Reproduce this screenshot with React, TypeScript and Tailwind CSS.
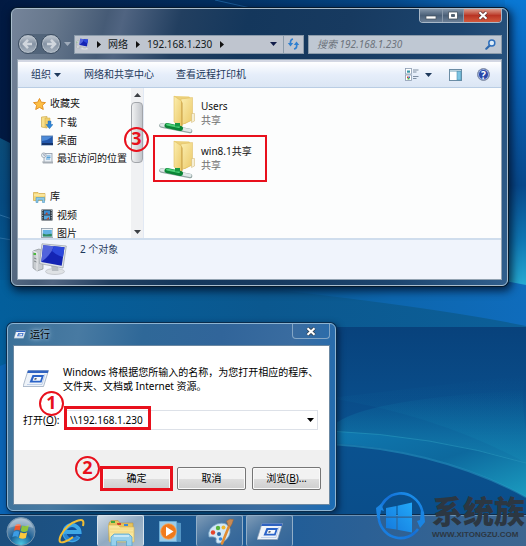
import type { ReactNode } from "react";

const favorites = [
  { label: "下载", icon: <DownloadIcon /> },
  { label: "桌面", icon: <DesktopIcon /> },
  { label: "最近访问的位置", icon: <RecentIcon /> },
];

const libraries = [
  { label: "视频", icon: <VideoIcon /> },
  { label: "图片", icon: <PictureIcon /> },
];

const shares = ["Users", "win8.1共享"];

export default function App() {
  return (
    <div className="relative flex min-h-screen flex-col overflow-hidden bg-[#0a4f88] font-['Noto_Sans','Noto_Sans_CJK_SC',sans-serif] text-[10px] text-black">
      <Wallpaper />
      <ExplorerWindow />
      <RunDialog />
      <Taskbar />
      <Watermark />
    </div>
  );
}

function Wallpaper() {
  return (
    <svg className="absolute inset-0 h-full w-full" viewBox="0 0 526 546" preserveAspectRatio="none" aria-hidden="true">
      <defs>
        <linearGradient id="sky" x1="0" x2="1" y1="0" y2="0">
          <stop offset="0" stopColor="#021a42" />
          <stop offset=".4" stopColor="#032f60" />
          <stop offset=".75" stopColor="#054a8c" />
          <stop offset="1" stopColor="#0a7ad6" />
        </linearGradient>
        <linearGradient id="right" x1="0" x2="0" y1="0" y2="1">
          <stop offset="0" stopColor="#0a78d4" />
          <stop offset=".3" stopColor="#0860b4" />
          <stop offset=".65" stopColor="#07488a" />
          <stop offset=".85" stopColor="#0f78b4" />
          <stop offset="1" stopColor="#25aad2" />
        </linearGradient>
        <linearGradient id="leftTeal" x1="0" x2="0" y1="0" y2="1">
          <stop offset="0" stopColor="#0b4c78" />
          <stop offset=".4" stopColor="#064a80" />
          <stop offset="1" stopColor="#035c98" />
        </linearGradient>
        <linearGradient id="middle" x1="0" x2="1" y1="0" y2="0">
          <stop offset="0" stopColor="#035f9c" />
          <stop offset=".5" stopColor="#0b588f" />
          <stop offset="1" stopColor="#0c5f98" />
        </linearGradient>
        <linearGradient id="ridge" x1="0" x2="1" y1="0" y2="0">
          <stop offset="0" stopColor="#0a5990" />
          <stop offset=".5" stopColor="#0d66ae" />
          <stop offset="1" stopColor="#0f6cbc" />
        </linearGradient>
        <linearGradient id="deep" x1="0" x2="0" y1="0" y2="1">
          <stop offset="0" stopColor="#08427c" />
          <stop offset=".5" stopColor="#0a5290" />
          <stop offset="1" stopColor="#0a4c88" />
        </linearGradient>
        <linearGradient id="beam" x1="0" x2="1" y1="0" y2="1">
          <stop offset="0" stopColor="#0f78b0" />
          <stop offset=".5" stopColor="#0d699e" />
          <stop offset="1" stopColor="#1b9cc0" />
        </linearGradient>
        <linearGradient id="glow" x1="0" x2="0" y1="0" y2="1">
          <stop offset="0" stopColor="#0f86b4" stopOpacity="0" />
          <stop offset="1" stopColor="#1896bc" stopOpacity=".9" />
        </linearGradient>
      </defs>
      <rect width="526" height="290" fill="url(#sky)" />
      <path d="M215 0L255 9" stroke="#1a5c98" strokeWidth="1" />
      <path d="M0 138L12 144V290H0z" fill="url(#leftTeal)" />
      <path d="M0 215L12 219M0 238L12 240" stroke="#2a6fa4" strokeWidth="1" />
      <rect y="280" width="526" height="266" fill="url(#middle)" />
      <path d="M260 280H526V326Q440 308 260 288z" fill="url(#ridge)" />
      <path d="M505 0H526V285L505 281z" fill="url(#right)" />
      <path d="M0 366Q12 360 30 362V514H0z" fill="#0b64b4" />
      <path d="M330 327H526V546H330z" fill="url(#deep)" />
      <path d="M330 398Q440 416 526 463V430Q520 395 526 375z" fill="url(#glow)" opacity=".25" />
      <path d="M330 431Q430 435 526 463V497Q440 449 330 443z" fill="url(#beam)" />
      <path d="M330 429Q350 400 526 390V463Q430 435 330 431z" fill="url(#glow)" opacity=".75" />
      <path d="M330 431Q430 435 526 463" fill="none" stroke="#2897bc" strokeWidth="1" opacity=".6" />
      <path d="M330 444Q440 450 526 497" fill="none" stroke="#2aa0c8" strokeWidth="2" opacity=".5" />
    </svg>
  );
}

function ExplorerWindow() {
  return (
    <section
      aria-label="网络"
      className="relative mt-2 mr-[18px] ml-[11px] rounded-md border border-[#a9bccb] bg-[linear-gradient(105deg,#75849a_0%,#66778c_8%,#465b76_17%,#506481_20%,#223f60_30%,#14375c_42%,#173a60_60%,#1c456f_80%,#315f8d_100%)] px-[5px] pb-[5px] shadow-[0_0_0_1px_#061a2c,2px_3px_8px_2px_rgba(0,10,30,0.75)]"
    >
      <div className="flex h-[14px] justify-end">
        <div className="flex overflow-hidden rounded-b border border-t-0 border-[#a8b8c8]">
          <CaptionButton label="最小化" className="w-[23px] border-r border-[#8798aa] bg-linear-to-b from-[#8496aa] via-[#4b6078] to-[#6b7f96]">
            <rect x="1" y="5" width="10" height="3" fill="#fff" stroke="#45505c" strokeWidth=".7" />
          </CaptionButton>
          <CaptionButton label="最大化" className="w-[21px] border-r border-[#8798aa] bg-linear-to-b from-[#8496aa] via-[#4b6078] to-[#6b7f96]">
            <path fillRule="evenodd" d="M1.500 1H10.500V8H1.500zM4.500 3.500V5.500H7.500V3.500z" fill="#fff" stroke="#45505c" strokeWidth=".8" />
          </CaptionButton>
          <CaptionButton label="关闭" className="w-[37px] bg-linear-to-b from-[#d99a8c] via-[#b93424] to-[#d2583c]">
            <path d="M2.500 1.200L9.500 7.800M9.500 1.200L2.500 7.800" stroke="#5c3434" strokeWidth="3.600" />
            <path d="M2.500 1.200L9.500 7.800M9.500 1.200L2.500 7.800" stroke="#fff" strokeWidth="2.200" />
          </CaptionButton>
        </div>
      </div>

      <div className="mt-[9px] mb-[3px] flex h-6 items-center">
        <div className="ml-px flex items-center gap-[3px] rounded-full bg-[#43566d]/60">
          <RoundButton label="后退" path="M14.500 10H6M10 5.500L5.500 10L10 14.500" />
          <RoundButton label="前进" path="M5.500 10H14M10 5.500L14.500 10L10 14.500" />
        </div>
        <span className="mx-[3px]">
          <Caret color="#9fabba" />
        </span>
        <div className="flex h-[19px] min-w-0 flex-1 items-center border border-[#8c9cab] bg-[#bfc5cf] pl-px">
          <PcIcon className="h-3 w-[13px] shrink-0" />
          <Chevron />
          <button className="ml-[7px] text-[#101820]">网络</button>
          <Chevron />
          <button className="ml-[7px] text-[#101820]">192.168.1.230</button>
          <Chevron />
          <button aria-label="历史记录" className="mr-[6px] ml-auto">
            <Caret color="#101c48" />
          </button>
          <button aria-label="刷新" className="flex h-full w-5 items-center justify-center border-l border-[#8c9cab]">
            <svg className="h-[12px] w-[13px]" viewBox="0 0 13 12">
              <path d="M6 1Q3 1.500 3.500 6M7 11Q10.500 10.500 9.500 6" fill="none" stroke="#2f7fd0" strokeWidth="1.700" />
              <path d="M.8 5H6.200L3.500 8.500zM6.800 7H12.200L9.500 3.500z" fill="#2f7fd0" />
            </svg>
          </button>
        </div>
        <div className="ml-1 flex h-[19px] w-[194px] items-center border border-[#8c9cab] bg-[#bfc8d3] pr-[5px] pl-2">
          <input
            type="search"
            aria-label="搜索"
            placeholder="搜索 192.168.1.230"
            className="min-w-0 flex-1 bg-transparent italic outline-none placeholder:text-[#6d747d]"
          />
          <svg className="h-[11px] w-[11px]" viewBox="0 0 11 11" fill="none">
            <path d="M5 6.200L1.300 9.700" stroke="#2e68ac" strokeWidth="2.200" strokeLinecap="round" />
            <circle cx="6.800" cy="4" r="3" stroke="#2e6fbc" strokeWidth="1.500" fill="#dcecf8" />
          </svg>
        </div>
      </div>

      <div className="border border-[#93a3b2] bg-[#fcfdfd]">
        <div className="flex h-7 items-center border-t-2 border-b border-t-[#d3d7e3] border-b-[#b9cde4] bg-linear-to-b from-white via-[#e6eefa] to-[#dbe6f4] pr-[11px] pl-[13px] text-[#1e395b]">
          <button className="flex items-center gap-[3px]">
            组织 <Caret color="#1e395b" />
          </button>
          <button className="ml-[23px] whitespace-nowrap">网络和共享中心</button>
          <button className="ml-[22px] whitespace-nowrap">查看远程打印机</button>
          <button aria-label="更改视图" className="ml-auto flex items-center gap-[6px]">
            <ViewsIcon />
            <Caret color="#1e395b" />
          </button>
          <button aria-label="预览窗格" className="ml-[17px]">
            <PaneIcon />
          </button>
          <button aria-label="帮助" className="ml-[15px] flex h-[13px] w-[13px] items-center justify-center rounded-full border border-[#8c96a8] bg-[#2846a8] text-[10px] leading-none font-bold text-white shadow-[inset_0_0_0_1px_#9ab0e0]">
            ?
          </button>
        </div>

        <div className="flex h-[150px]">
          <nav className="w-[113px] shrink-0 overflow-hidden pt-[6px] pl-[15px] text-[#111]">
            <TreeGroup title="收藏夹" icon={<StarIcon />} items={favorites} />
            <div className="h-5" />
            <TreeGroup title="库" icon={<LibraryIcon />} items={libraries} />
          </nav>
          <div className="flex w-[13px] shrink-0 flex-col items-center border-r border-[#e2e9f4] bg-[#f0f1f3]" aria-hidden="true">
            <svg className="my-[5px] h-1 w-[7px]" viewBox="0 0 7 4">
              <path d="M0 4L3.500 0L7 4z" fill="#3c3f44" />
            </svg>
            <div className="relative h-[61px] w-3 rounded-sm border border-[#a2a5aa] bg-linear-to-r from-[#f0f1f2] to-[#c2c5ca]">
              <Step n={3} className="top-6 -left-2" />
            </div>
            <span className="mt-auto mb-1">
              <Caret color="#3c3f44" />
            </span>
          </div>
          <ul className="pt-1 pl-[9px]">
            {shares.map((name, i) => (
              <li key={name} className="relative flex h-[45px] w-[114px] items-center pl-[6px]">
                <ShareFolderIcon />
                <div className="mb-1 ml-[6px] leading-[14px]">
                  <p className="text-[#111]">{name}</p>
                  <p className="text-[#707070]">共享</p>
                </div>
                {i === 1 && <span className="absolute -top-[2px] bottom-0 left-0 w-[114px] border-2 border-[#e8101c]" />}
              </li>
            ))}
          </ul>
        </div>

        <footer className="flex h-[41px] border-t-2 border-[#cfdded] bg-[#f0f4fc] pl-[14px] text-[#1e395b]">
          <PcIcon className="mt-[3px] h-8 w-[35px]" />
          <p className="mt-[2px] ml-[13px] leading-[14px]">2 个对象</p>
        </footer>
      </div>
    </section>
  );
}

function CaptionButton({ label, className, children }: { label: string; className: string; children: ReactNode }) {
  return (
    <button aria-label={label} className={`flex items-center justify-center ${className}`}>
      <svg className="h-[9px] w-3" viewBox="0 0 12 9">
        {children}
      </svg>
    </button>
  );
}

function RoundButton({ label, path }: { label: string; path: string }) {
  return (
    <button
      aria-label={label}
      className="h-5 w-5 rounded-full border border-[#3d4e62] bg-linear-to-b from-[#c3cad2] via-[#8593a4] to-[#a9b4c0] shadow-[inset_0_0_0_1px_#b6c0ca]"
    >
      <svg viewBox="0 0 20 20" fill="none">
        <path d={path} stroke="#d0d6dd" strokeWidth="2.800" />
      </svg>
    </button>
  );
}

function Caret({ color }: { color: string }) {
  return (
    <svg className="block h-1 w-[7px]" viewBox="0 0 7 4">
      <path d="M0 0H7L3.500 4z" fill={color} />
    </svg>
  );
}

function Chevron() {
  return (
    <svg className="ml-2 h-[7px] w-1 shrink-0" viewBox="0 0 4 7">
      <path d="M0 0L4 3.500L0 7z" fill="#101010" />
    </svg>
  );
}

// Red numbered marker
function Step({ n, className }: { n: number; className: string }) {
  return (
    <span
      className={`absolute z-10 flex h-[25px] w-[25px] items-center justify-center rounded-full border-2 border-[#e8101c] pb-[3px] text-[18px] leading-none font-bold text-[#e8101c] ${className}`}
    >
      {n}
    </span>
  );
}

function TreeGroup({ title, icon, items }: { title: string; icon: ReactNode; items: { label: string; icon: ReactNode }[] }) {
  return (
    <div>
      <h2 className="flex h-[19px] items-center gap-1">
        {icon}
        {title}
      </h2>
      <ul className="pl-2">
        {items.map((item) => (
          <li key={item.label} className="flex h-[18px] items-center gap-1 whitespace-nowrap">
            {item.icon}
            {item.label}
          </li>
        ))}
      </ul>
    </div>
  );
}

function RunDialog() {
  return (
    <section
      aria-label="运行"
      className="relative mt-[37px] ml-[7px] w-[329px] rounded-md border border-[#8db4d2] bg-[linear-gradient(100deg,#3b7098_0%,#487aa2_20%,#2f6898_38%,#31659a_60%,#3a6ca0_80%,#1c6cb4_100%)] px-[5px] pb-[5px] shadow-[0_0_0_1px_#0a2c4c,2px_2px_6px_1px_rgba(0,15,40,0.6)]"
    >
      <div className="flex h-[21px] items-start">
        <div className="flex h-full items-center gap-1 pl-px">
          <RunIcon className="h-[9px] w-[12px]" />
          <h1 className="text-black [text-shadow:0_0_6px_#b8d4e8,0_0_3px_#b8d4e8]">运行</h1>
        </div>
        <button aria-label="关闭" className="ml-auto flex h-[15px] w-[38px] items-center justify-center rounded-b border border-t-0 border-[#83a6c6]">
          <svg className="h-[9px] w-3" viewBox="0 0 12 9">
            <path d="M2.500 1.200L9.500 7.800M9.500 1.200L2.500 7.800" stroke="#303c48" strokeWidth="3.600" />
            <path d="M2.500 1.200L9.500 7.800M9.500 1.200L2.500 7.800" stroke="#fff" strokeWidth="2.200" />
          </svg>
        </button>
      </div>
      <form className="border border-[#6b88a2] bg-white" onSubmit={(e) => e.preventDefault()}>
        <div className="pt-[19px] pr-[11px] pb-5 pl-[9px]">
          <div className="flex gap-[14px]">
            <RunIcon className="mt-[5px] h-[17px] w-[26px] shrink-0" />
            <p className="leading-[14px] whitespace-nowrap">
              Windows 将根据您所输入的名称，为您打开相应的程序、
              <br />
              文件夹、文档或 Internet 资源。
            </p>
          </div>
          <div className="mt-[17px] flex h-5 items-center">
            <label htmlFor="run-target" className="w-[41px] whitespace-nowrap">
              打开(<u>O</u>):
            </label>
            <div className="relative flex h-full flex-1 items-center border border-[#dde1e8] pr-[3px]">
              <input id="run-target" defaultValue="\\192.168.1.230" className="min-w-0 flex-1 bg-transparent pl-[5px] outline-none" />
              <button type="button" aria-label="展开">
                <Caret color="#000" />
              </button>
              <span className="pointer-events-none absolute -top-[5px] -left-[1px] h-6 w-[87px] border-[3px] border-[#e8101c]" />
              <Step n={1} className="-top-5 -left-[26px]" />
            </div>
          </div>
        </div>
        <div className="flex h-[54px] items-start justify-end gap-[6px] bg-[#f0f0f0] pt-[17px] pr-2">
          <div className="relative">
            <DialogButton>确定</DialogButton>
            <span className="pointer-events-none absolute -inset-x-[2px] -inset-y-px border-[3px] border-[#e8101c]" />
            <Step n={2} className="-top-[11px] -left-[27px]" />
          </div>
          <DialogButton>取消</DialogButton>
          <DialogButton>
            浏览(<u>B</u>)...
          </DialogButton>
        </div>
      </form>
    </section>
  );
}

function DialogButton({ children }: { children: ReactNode }) {
  return (
    <button
      type="button"
      className="block h-[23px] w-[69px] rounded-xs border border-[#767676] bg-linear-to-b from-[#f2f2f2] from-50% via-[#dfdfdf] via-50% to-[#cfcfcf] shadow-[inset_0_0_0_1px_#fafafa]"
    >
      {children}
    </button>
  );
}

function Taskbar() {
  return (
    <footer className="relative mt-auto flex h-8 items-stretch border-t border-[#0c2c4c] bg-linear-to-r from-[#1c4f7e] via-[#1d5c98] to-[#3d6690] pl-[6px] shadow-[inset_0_1px_0_#6c93b6]">
      <button aria-label="开始" className="w-[30px]">
        <StartIcon />
      </button>
      <button aria-label="Internet Explorer" className="ml-5 w-[30px]">
        <IeIcon />
      </button>
      <button aria-label="资源管理器" className="ml-[11px] flex w-[47px] justify-center rounded-xs border border-b-0 border-[#d8e4ee] bg-linear-to-br from-[#cfdae4] via-[#91aac2] to-[#a8bccd]">
        <ExplorerIcon />
      </button>
      <button aria-label="媒体播放器" className="mx-[13px] w-[26px]">
        <MediaIcon />
      </button>
      <button aria-label="画图" className="flex w-[47px] justify-center rounded-xs border border-b-0 border-[#91aec8] bg-linear-to-br from-[#7d9ab6] via-[#406f9c] to-[#32659a]">
        <PaintIcon />
      </button>
      <button aria-label="运行" className="ml-[3px] flex w-[47px] items-center justify-center rounded-xs border border-b-0 border-[#91aec8] bg-linear-to-br from-[#7d9ab6] via-[#406f9c] to-[#32659a]">
        <RunIcon className="h-[17px] w-[26px]" />
      </button>
    </footer>
  );
}

function Watermark() {
  return (
    <div className="pointer-events-none absolute right-0 bottom-0 flex w-[150px] items-start pb-1">
      <svg className="h-[52px] w-[50px] shrink-0" viewBox="0 0 50 52" fill="none">
        <defs>
          <linearGradient id="ring" x1="0" y1="1" x2="1" y2="0">
            <stop offset="0" stopColor="#1b86e6" />
            <stop offset=".55" stopColor="#1470d8" />
            <stop offset="1" stopColor="#1c9af0" />
          </linearGradient>
          <linearGradient id="panes" x1="0" y1="1" x2="1" y2="0">
            <stop offset="0" stopColor="#1478dc" />
            <stop offset="1" stopColor="#22a8f8" />
          </linearGradient>
        </defs>
        <path d="M3 24A22 23 0 0 1 46 20Q47.500 25 46 33" stroke="url(#ring)" strokeWidth="2.600" />
        <path d="M42 39A22 23 0 0 1 3 30L2 20" stroke="url(#ring)" strokeWidth="2.600" />
        <path d="M41 31L44 38L49 32L48 22L45 20L44 30zM0 18L5 14L8 21L4.500 20L3.500 30L1 27z" fill="#1a84e2" />
        <path d="M10 18L20.500 16V26.500H10zM21.500 15.800L36 12.500V26.500H21.500zM10 27.800H20.500V39.500L10 38zM21.500 27.800H36V42.500L21.500 39.700z" fill="url(#panes)" />
      </svg>
      <div className="mt-1 ml-[6px] whitespace-nowrap text-[#2c3742]">
        <p className="font-['Noto_Sans_CJK_SC',sans-serif] text-[31px] leading-[32px] font-black">系统族</p>
        <p className="mt-1 font-['Liberation_Sans',sans-serif] text-[8px] leading-[10px] font-bold">WWW.XITONGZU.COM</p>
      </div>
    </div>
  );
}

function StarIcon() {
  return (
    <svg className="h-3 w-[13px]" viewBox="0 0 13 12">
      <path d="M6.500 .5L8.300 4.200L12.500 4.600L9.400 7.300L10.300 11.500L6.500 9.400L2.700 11.500L3.600 7.300L.5 4.600L4.700 4.200z" fill="#fdbf45" stroke="#e08a1c" strokeWidth=".9" />
    </svg>
  );
}

function DownloadIcon() {
  return (
    <svg className="h-[13px] w-3" viewBox="0 0 12 13">
      <path d="M.5 1L6 .5V12L.5 11z" fill="#f7df8a" stroke="#cfa94a" strokeWidth=".7" />
      <path d="M4 2H9V11H4z" fill="#f1cf6c" stroke="#cfa94a" strokeWidth=".5" />
      <path d="M7 5H10V8.500H12L8.500 12.700L5 8.500H7z" fill="#2f86d8" stroke="#1c62a8" strokeWidth=".4" />
    </svg>
  );
}

function DesktopIcon() {
  return (
    <svg className="h-[11px] w-3" viewBox="0 0 12 11">
      <rect x=".5" y="1" width="11.500" height="9" fill="#2358ac" stroke="#6d8fb8" />
      <path d="M1 1.500H11.500L6 5L1 6z" fill="#4c8ad8" />
      <rect x="1" y="8" width="11" height="2" fill="#16356c" />
    </svg>
  );
}

function RecentIcon() {
  return (
    <svg className="h-3 w-3" viewBox="0 0 12 12">
      <rect x="3" y="1.500" width="8" height="9" fill="#e8eef4" stroke="#8e9aa8" strokeWidth=".8" />
      <path d="M5.500 4H9.500M5.500 5.500H9.500M5 7H9" stroke="#55a0d8" />
      <path d="M1 9.500H12V11.500H2z" fill="#a5adb5" />
      <circle cx="2.800" cy="3.200" r="2.300" fill="#e8f2f8" stroke="#8b949e" strokeWidth=".7" />
      <path d="M2.800 1.800V3.300H4" stroke="#557" strokeWidth=".5" fill="none" />
    </svg>
  );
}

function LibraryIcon() {
  return (
    <svg className="h-3 w-[13px]" viewBox="0 0 13 12">
      <path d="M.5 1.500H5L6 2.500H12V9.500H.5z" fill="#f5d878" stroke="#d0a748" strokeWidth=".7" />
      <path d="M1 4H12" stroke="#fff3be" />
      <path d="M3 6.500H11.500V11.500H9.500V9H5V11.500H3z" fill="#8cc8e8" stroke="#4c98c4" strokeWidth=".6" />
    </svg>
  );
}

function VideoIcon() {
  return (
    <svg className="h-3 w-3" viewBox="0 0 12 12">
      <rect x=".5" y=".5" width="11" height="11" fill="#2a3640" />
      <path d="M1.700 1V11M10.300 1V11" stroke="#b9c6cf" strokeDasharray="1.200 1.200" />
      <rect x="3" y="1.500" width="6" height="4" fill="#3a8cd0" />
      <rect x="3" y="6.500" width="6" height="4" fill="#58a6dc" />
      <path d="M4 5.500L6 3L7 5.500zM5 10.500L8 8V10.500z" fill="#b8442c" />
    </svg>
  );
}

function PictureIcon() {
  return (
    <svg className="h-[11px] w-3" viewBox="0 0 12 11">
      <rect x=".5" y=".5" width="11.500" height="9" fill="#eaf2f6" stroke="#8a98a6" strokeWidth=".8" />
      <rect x="1.800" y="2" width="9" height="6.500" fill="#62b2e4" />
      <path d="M1.800 8.500V5.500L5 6.500L10.800 5.800V8.500z" fill="#2f8a60" />
    </svg>
  );
}

function ViewsIcon() {
  return (
    <svg className="h-[13px] w-[14px]" viewBox="0 0 14 13">
      <rect x=".5" y=".5" width="6" height="5.500" fill="#fff" stroke="#8b9bb0" strokeWidth=".8" />
      <rect x=".5" y="7" width="6" height="5.500" fill="#fff" stroke="#8b9bb0" strokeWidth=".8" />
      <rect x="2" y="2.500" width="3" height="2.200" fill="#3a98a8" />
      <path d="M2 8.500H3.500V10H2z" fill="#d83c2c" />
      <path d="M3.500 8.500H5V10H3.500z" fill="#3866c8" />
      <path d="M2.500 10H4.500V11.500H2.500z" fill="#4ab03c" />
      <path d="M8 2H13.500M8 4H11.500M8 8.500H13.500M8 10.500H11.500" stroke="#7f8ea2" />
    </svg>
  );
}

function PaneIcon() {
  return (
    <svg className="h-3 w-[13px]" viewBox="0 0 13 12">
      <rect x=".5" y=".5" width="12" height="11" fill="#fff" stroke="#6c8ca4" />
      <path d="M.5 2H12.500" stroke="#6fa0b8" />
      <rect x="8" y="2.500" width="4" height="8.500" fill="#7cc4e2" stroke="#4c90b0" strokeWidth=".6" />
    </svg>
  );
}

function PcIcon({ className }: { className: string }) {
  return (
    <svg className={className} viewBox="0 0 35 32">
      <path d="M1 8L7 6L11 8V26L5 28L1 25z" fill="#c8ccd0" stroke="#8d9398" strokeWidth=".7" />
      <path d="M1 8L5 10V28" fill="none" stroke="#eef0f2" />
      <rect x="1.500" y="10" width="2.500" height="2" fill="#4ab83c" />
      <path d="M2 15L4.500 16M2 18L4.500 19" stroke="#6d7378" strokeWidth=".8" />
      <ellipse cx="23" cy="28.500" rx="9.500" ry="3" fill="#dfe2e5" stroke="#b1b6bb" strokeWidth=".6" />
      <path d="M19 22L26 23L26.500 28H20z" fill="#b9bec3" />
      <path d="M10 .8L34.300 3L31 25L7.500 20.500z" fill="#dfe3e7" stroke="#989fa6" strokeWidth=".7" />
      <path d="M11.200 2.200L32.500 4.200L29.700 22.800L9.300 19z" fill="#1424b4" />
      <path d="M11.200 2.200L22 3.200Q19 12 9.300 19z" fill="#5264dc" />
      <path d="M22 3.200L32.500 4.200L31 14Q24 12 20 8z" fill="#2c48dc" />
    </svg>
  );
}

function ShareFolderIcon() {
  return (
    <svg className="h-[39px] w-[36px] shrink-0" viewBox="0 0 36 39">
      <defs>
        <linearGradient id="folderFront" x1="0" x2="1" y1="0" y2="1">
          <stop offset="0" stopColor="#fbeeb0" />
          <stop offset="1" stopColor="#ecc968" />
        </linearGradient>
      </defs>
      <path d="M15 1L30 1.500L33 4V25L26 29H16z" fill="#ecd079" />
      <path d="M22 4L33.500 2.500V25L22 30z" fill="url(#folderFront)" stroke="#dcb85c" strokeWidth=".5" />
      <path d="M32.500 18.500H35.500V26L32.500 27.500z" fill="#f6efd4" stroke="#d0b46a" strokeWidth=".5" />
      <path d="M15 1L22.500 6V32L15 27z" fill="url(#folderFront)" stroke="#e0bf62" strokeWidth=".6" />
      <path d="M22.500 6L23.500 8V31L22.500 32z" fill="#c89c40" />
      <path d="M2.500 30.500L31 36" stroke="#93a5a3" strokeWidth="4.600" strokeLinecap="round" />
      <path d="M2.500 30L31 35.500" stroke="#dfe8e8" strokeWidth="3" strokeLinecap="round" />
      <path d="M8 30.500L21.500 33.500" stroke="#0b8536" strokeWidth="5" strokeLinecap="round" />
      <path d="M8 29.500L20 32" stroke="#4cd078" strokeWidth="1.800" strokeLinecap="round" />
      <path d="M16 28H21V31.500H16z" fill="#159a42" />
    </svg>
  );
}

function RunIcon({ className }: { className: string }) {
  return (
    <svg className={className} viewBox="0 0 26 17">
      <path d="M5 .5H25.500L20.500 16.500H0z" fill="#eef3f9" stroke="#8fa0b8" strokeWidth=".7" />
      <path d="M5 .5H25.500L24.800 3H4.200z" fill="#2f62c0" />
      <path d="M9.500 5H21L18.500 12.500H6.500z" fill="#2a63c8" />
      <path d="M11 7H18.500L17.200 10.700H9.500z" fill="#f4f8fc" />
      <path d="M11.800 8H13.800L13.200 9.700H11.200z" fill="#5a6474" />
      <path d="M22 4L19 14.500H4" fill="none" stroke="#b3c7e4" strokeWidth=".8" />
    </svg>
  );
}

function StartIcon() {
  return (
    <svg className="h-[31px] w-[30px]" viewBox="0 0 30 31">
      <defs>
        <radialGradient id="orb" cx=".5" cy=".95" r=".9">
          <stop offset="0" stopColor="#4cc8e4" />
          <stop offset=".45" stopColor="#1a5e94" />
          <stop offset="1" stopColor="#96aec4" />
        </radialGradient>
      </defs>
      <circle cx="15" cy="16.500" r="14" fill="url(#orb)" stroke="#7493ac" strokeWidth="1" />
      <path d="M9.500 10Q12.500 8 15 9.800L13.700 15.500Q11 14 8 15.800z" fill="#f0582c" />
      <path d="M16 10.500Q19 12 23 10L21.500 16Q18 17.800 14.700 16z" fill="#8cc43c" />
      <path d="M7.700 17Q10.500 15.200 13.400 16.800L12 22Q9.300 20.500 6.300 22.300z" fill="#3c9ce4" />
      <path d="M14.400 17.300Q18 19 21.200 17.200L19.800 23Q16.500 24.500 13 22.700z" fill="#fcc83c" />
      <path d="M2.500 13A13 13 0 0 1 27.500 13Q15 8 2.500 13z" fill="#fff" opacity=".28" />
    </svg>
  );
}

function IeIcon() {
  return (
    <svg className="h-[31px] w-[30px]" viewBox="0 0 30 31" fill="none">
      <circle cx="16" cy="17" r="10" fill="#0d4f9c" />
      <path d="M22.500 21.500A7.600 7.600 0 1 1 23.500 17H10" stroke="#3fa8e6" strokeWidth="4" />
      <path d="M22 22A7.600 7.600 0 0 1 9 19" stroke="#2a84d0" strokeWidth="3" />
      <path d="M27 11Q29 3 22 5.500Q11 9 5 20Q1 29 8 27Q13 25.500 17 22" stroke="#f0bd34" strokeWidth="2" />
    </svg>
  );
}

function ExplorerIcon() {
  return (
    <svg className="h-[31px] w-[30px]" viewBox="0 0 30 31">
      <path d="M3 7L5 4.500H12L14 7H27V25H3z" fill="#e6c35c" stroke="#b99540" strokeWidth=".6" />
      <path d="M5 5H9V7H5z" fill="#40a83c" />
      <path d="M11 7H15V9H11z" fill="#d8402c" />
      <path d="M18 8H22V10H18z" fill="#3c88d8" />
      <path d="M2.500 9H12L14 11H28V26H3.500z" fill="#f9e69c" stroke="#d8b654" strokeWidth=".7" />
      <path d="M4 13H27M4 16H27" stroke="#f2d781" strokeWidth="1" />
      <path d="M8 18H23L26 21V30H20.500V25H10.500V30H5V21z" fill="#97d0ec" stroke="#5ba4cc" strokeWidth=".8" />
      <path d="M8 20H23" stroke="#d8f0fa" strokeWidth="1.500" />
    </svg>
  );
}

function MediaIcon() {
  return (
    <svg className="h-[31px] w-[26px]" viewBox="0 0 26 31">
      <path d="M6 6L24 8V27L6 26z" fill="#62a4d0" opacity=".8" />
      <path d="M2.500 6.500H19.500V26.500H2.500z" fill="#9acbe8" stroke="#6cb0da" strokeWidth=".8" />
      <circle cx="11.500" cy="16.500" r="7.800" fill="#f07a1c" stroke="#f7ac62" strokeWidth=".8" />
      <path d="M9 11.800L16.500 16.500L9 21.200z" fill="#fff" />
    </svg>
  );
}

function PaintIcon() {
  return (
    <svg className="h-[31px] w-[30px]" viewBox="0 0 30 31">
      <path d="M4 21Q2 12 12 8Q22 5 25 13Q26 21 18 26Q11 29 11 25Q13 20 4 21z" fill="#d3e8f6" stroke="#7ea8c8" strokeWidth=".8" />
      <circle cx="8" cy="16.500" r="2.200" fill="#e4442c" />
      <circle cx="13" cy="12" r="2.200" fill="#58b43c" />
      <circle cx="18.500" cy="11.500" r="2" fill="#f0b82c" />
      <circle cx="14" cy="18" r="2" fill="#2c68a4" />
      <circle cx="15.500" cy="23" r="1.800" fill="#3c8ce0" />
      <path d="M24.500 9L17 27.500" stroke="#e08c34" strokeWidth="2.600" strokeLinecap="round" />
      <path d="M23 9.500L21.500 5L25 3L28.500 3.500L27 8L25.500 10.500z" fill="#c88a54" stroke="#9a6434" strokeWidth=".5" />
    </svg>
  );
}
